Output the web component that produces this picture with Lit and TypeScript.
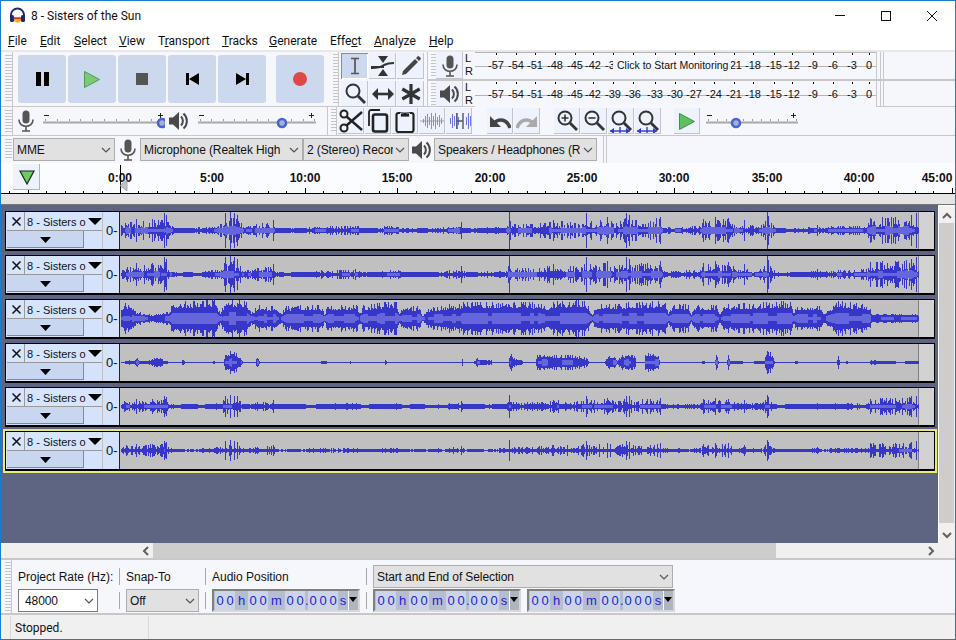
import { LitElement, html, svg, css } from 'lit';
import { customElement } from 'lit/decorators.js';

type Env = [number, number][];

// envelope points are [x, half height], read off the reference at 1.912 x-scale and 3x y-scale
const MAIN: Env = [[0, 14], [10, 32], [25, 18], [40, 26], [60, 32], [75, 28], [82, 40], [90, 24], [100, 7], [115, 5], [170, 10], [190, 18], [198, 36], [215, 38], [225, 28], [235, 9], [260, 18], [290, 24], [295, 5], [330, 6], [380, 11], [450, 14], [460, 6], [490, 4], [500, 11], [530, 13], [540, 4], [600, 7], [650, 18], [660, 6], [735, 9], [742, 30], [750, 18], [800, 20], [830, 28], [870, 22], [890, 34], [900, 26], [930, 36], [945, 22], [965, 36], [975, 30], [1000, 32], [1030, 36], [1035, 9], [1080, 11], [1108, 11], [1114, 30], [1140, 30], [1160, 34], [1180, 15], [1225, 15], [1235, 36], [1245, 16], [1258, 4], [1300, 6], [1330, 11], [1340, 6], [1360, 13], [1400, 13], [1425, 15], [1435, 36], [1480, 38], [1510, 42], [1522, 13], [1526, 2]];
const LOUD: Env = [[0, 30], [10, 42], [25, 20], [55, 10], [70, 12], [90, 16], [98, 44], [180, 48], [190, 12], [198, 52], [240, 46], [248, 14], [262, 36], [285, 30], [295, 38], [305, 10], [315, 32], [380, 36], [388, 14], [395, 34], [450, 36], [456, 12], [462, 34], [525, 46], [532, 14], [540, 30], [570, 32], [576, 8], [590, 30], [650, 40], [656, 44], [800, 42], [808, 32], [832, 46], [888, 48], [900, 10], [908, 36], [1040, 48], [1046, 16], [1055, 38], [1085, 36], [1090, 12], [1098, 36], [1138, 34], [1144, 14], [1150, 36], [1280, 46], [1286, 14], [1292, 34], [1335, 32], [1342, 12], [1368, 46], [1430, 36], [1434, 12], [1520, 12], [1526, 2]];
const VOICE: Env = [[0, 0], [10, 4], [28, 6], [30, 20], [34, 5], [50, 5], [70, 14], [75, 16], [80, 4], [88, 3], [92, 0], [115, 0], [118, 12], [121, 0], [172, 0], [176, 3], [180, 0], [196, 0], [198, 30], [212, 36], [228, 18], [232, 0], [256, 0], [260, 18], [265, 0], [380, 0], [382, 4], [392, 4], [395, 0], [435, 0], [438, 3], [441, 0], [503, 0], [505, 10], [507, 0], [650, 0], [652, 8], [654, 0], [674, 0], [680, 12], [690, 8], [708, 6], [710, 0], [740, 0], [743, 28], [752, 10], [765, 8], [768, 0], [792, 0], [796, 28], [830, 22], [860, 22], [890, 12], [895, 0], [925, 0], [930, 20], [945, 20], [948, 2], [955, 20], [970, 28], [982, 18], [985, 0], [1000, 0], [1002, 28], [1027, 28], [1029, 0], [1110, 0], [1113, 8], [1116, 0], [1134, 0], [1138, 26], [1142, 0], [1158, 0], [1160, 28], [1164, 5], [1188, 3], [1192, 0], [1208, 0], [1212, 5], [1230, 3], [1234, 38], [1246, 24], [1249, 0], [1285, 0], [1290, 4], [1300, 0], [1368, 0], [1370, 22], [1374, 0], [1384, 0], [1386, 8], [1390, 0], [1430, 0], [1432, 5], [1480, 4], [1484, 0], [1498, 0], [1500, 4], [1525, 4], [1526, 0]];

// single-column peaks that stand out of the main mix
const MAIN_SPIKES: Env = [[28, 32], [60, 34], [82, 50], [86, 44], [198, 50], [208, 54], [216, 50], [222, 46], [290, 30], [650, 24], [742, 54], [826, 30], [890, 50], [930, 38], [966, 50], [972, 46], [1030, 40], [1112, 34], [1136, 40], [1160, 36], [1192, 30], [1235, 54], [1238, 42], [1330, 16], [1432, 36], [1455, 40], [1480, 38], [1510, 46], [1520, 50]];

function envAt(env: Env, x: number) {
  for (let i = 1; i < env.length; i++) {
    if (x <= env[i][0]) {
      const [x0, y0] = env[i - 1];
      const [x1, y1] = env[i];
      return y0 + ((y1 - y0) * (x - x0)) / (x1 - x0 || 1);
    }
  }
  return 0;
}

function buildWave(env: Env, spikes: Env, seed: number, scale: number, floor: number, kmin: number, rmsK: number) {
  let s = seed;
  const rand = () => {
    s = (s * 1664525 + 1013904223) % 4294967296;
    return s / 4294967296;
  };
  const cy = 18.5;
  const tall = new Map(spikes.map(([x, h]) => [Math.round(x / 1.912), (h / 3) * scale]));
  let peak = '';
  let rms = '';
  let block = 1;
  let left = 0;
  for (let col = 0; col < 798; col++) {
    if (left-- <= 0) {
      // runs of quieter samples give the band its broken edge
      block = rand() < 0.35 ? 0.4 : 1;
      left = 2 + Math.floor(rand() * 8);
    }
    const zx = col * 1.912;
    const e = (envAt(env, zx) / 3) * scale;
    const r = rand();
    const k = rand() < 0.1 ? 1 : kmin + r * r * (1 - kmin);
    const a = Math.min(18, Math.max(floor * block, e * k, tall.get(col) ?? 0));
    const x = col + 1.5;
    peak += `M${x} ${Math.floor(cy - a)}V${Math.ceil(cy + a)}`;
    const b = Math.min(a, e * rmsK * block);
    if (b >= 1) rms += `M${x} ${Math.floor(cy - b)}V${Math.ceil(cy + b)}`;
  }
  return { peak, rms };
}

const WAVES = [
  buildWave(MAIN, MAIN_SPIKES, 11, 1, 2, 0.25, 0.3),
  buildWave(MAIN, MAIN_SPIKES, 47, 1, 2, 0.25, 0.26),
  buildWave(LOUD, [], 93, 1.12, 2, 0.6, 0.3),
  buildWave(VOICE, [], 5, 1, 0.5, 0.55, 0.3),
  buildWave(MAIN, MAIN_SPIKES, 77, 0.62, 2, 0.2, 0.18),
  buildWave(MAIN, MAIN_SPIKES, 131, 0.55, 1, 0.15, 0.14),
];

const DB = [[21, '-57'], [41, '-54'], [60, '-51'], [80, '-48'], [100, '-45'], [118, '-42'], [138, '-39'], [158, '-36'], [180, '-33'], [200, '-30'], [219, '-27'], [239, '-24'], [259, '-21'], [278, '-18'], [299, '-15'], [317, '-12'], [338, '-9'], [358, '-6'], [377, '-3'], [394, '0']] as [number, string][];

// these sit fully under the "Click to Start Monitoring" label
const HIDDEN = ['-36', '-33', '-30', '-27', '-24'];

const MENUS: [string, string, string, number][] = [
  ['', 'F', 'ile', 32], ['', 'E', 'dit', 34], ['', 'S', 'elect', 45], ['', 'V', 'iew', 39],
  ['T', 'r', 'ansport', 64], ['', 'T', 'racks', 47], ['', 'G', 'enerate', 61], ['Effe', 'c', 't', 44],
  ['', 'A', 'nalyze', 55], ['', 'H', 'elp', 30],
];

const chevron = html`<svg class="chev" width="10" height="6" viewBox="0 0 10 6"><path d="M1 1l4 4 4-4" fill="none" stroke="#555" stroke-width="1.2"/></svg>`;

const micIcon = html`<svg width="18" height="22" viewBox="0 0 18 22"><rect x="5.5" y="0.5" width="7" height="13" rx="3.5" fill="#555"/><path d="M2 9.5c0 9 14 9 14 0" fill="none" stroke="#555" stroke-width="1.6"/><path d="M9 16v5M5 21h8" stroke="#555" stroke-width="1.6"/></svg>`;

const speakerIcon = html`<svg width="20" height="20" viewBox="0 0 20 20"><path d="M0 6.5h4L10 1v18L4 13.5H0z" fill="#4a4a4a"/><path d="M12 5.5c2.5 2.5 2.5 6.5 0 9M14.5 2.5c4.5 4 4.5 11 0 15" fill="none" stroke="#4a4a4a" stroke-width="2"/></svg>`;

const lens = (extra = svg``, stroke = '#333') => html`<svg width="24" height="24" viewBox="0 0 24 24"><circle cx="10" cy="9" r="6.5" fill="none" stroke="${stroke}" stroke-width="2"/><path d="M15 14l7 7" stroke="${stroke}" stroke-width="2.8"/>${extra}</svg>`;

const blueArrows = svg`<path d="M1 22h20" stroke="#2a3ccc" stroke-width="1.4"/><path d="M1 22l4-3v6zM21 22l-4-3v6z" fill="#2a3ccc"/><path d="M11 18v7" stroke="#2a3ccc" stroke-width="1.4"/>`;

const bars = (heights: number[], color: string) => svg`${heights.map((h, i) => svg`<path d="M${3.5 + i * 2} ${12 - h}V${12 + h}" stroke="${color}" stroke-width="1"/>`)}`;

const TOOLS = [
  html`<svg width="20" height="20" viewBox="0 0 20 20"><path d="M6 2.500h8M6 17.500h8M10 2.500v15" stroke="#555" stroke-width="1.700" fill="none"/></svg>`,
  html`<svg width="24" height="22" viewBox="0 0 24 22"><path d="M7 1h10l-5 7zM7 21h10l-5-7z" fill="#333"/><path d="M1 13c7 0 9-1 12-3 3-1.500 6-2 10-2" stroke="#333" stroke-width="2" fill="none"/><path d="M1 11v3M1 12h12" stroke="#333" stroke-width="2"/></svg>`,
  html`<svg width="22" height="22" viewBox="0 0 22 22"><path d="M3 16L15 4l3 3L6 19l-4 1z" fill="#444"/><path d="M16 3l1.500-1.500a1.200 1.200 0 0 1 1.700 0l1.300 1.300a1.200 1.200 0 0 1 0 1.700L19 6z" fill="#444"/></svg>`,
  lens(),
  html`<svg width="22" height="14" viewBox="0 0 22 14"><path d="M0 7l6-6v12zM22 7l-6-6v12z" fill="#333"/><path d="M5 7h12" stroke="#333" stroke-width="2.600"/></svg>`,
  html`<svg width="22" height="22" viewBox="0 0 22 22"><path d="M11 1v20M2.300 6l17.400 10M2.300 16L19.700 6" stroke="#333" stroke-width="3.200"/></svg>`,
];

const EDIT1 = [
  html`<svg width="24" height="24" viewBox="0 0 24 24"><circle cx="5" cy="5" r="3.500" fill="none" stroke="#222" stroke-width="2"/><circle cx="5" cy="19" r="3.500" fill="none" stroke="#222" stroke-width="2"/><path d="M7.500 7.500L23 21M7.500 16.500L23 3" stroke="#222" stroke-width="2.400"/></svg>`,
  html`<svg width="24" height="24" viewBox="0 0 24 24"><path d="M14 1H5a2 2 0 0 0-2 2v14" fill="none" stroke="#222" stroke-width="1.800"/><rect x="7" y="5.500" width="14" height="17" rx="2" fill="none" stroke="#222" stroke-width="2.600"/></svg>`,
  html`<svg width="22" height="24" viewBox="0 0 22 24"><rect x="2.500" y="4" width="17" height="19" rx="2" fill="none" stroke="#222" stroke-width="2.200"/><path d="M6.500 8V4h3a1.600 1.600 0 0 1 3 0h3v4z" fill="#222" stroke="#eef2fc" stroke-width="0.800"/></svg>`,
  html`<svg width="24" height="24" viewBox="0 0 24 24"><path d="M0 12h24" stroke="#a0a0a8"/>${bars([2, 5, 7, 4, 8, 5, 8, 4, 6, 3], '#8c90c0')}</svg>`,
  html`<svg width="24" height="24" viewBox="0 0 24 24">${bars([3, 7, 5, 8, 4], '#6a74d8')}<path d="M10 4v16M16 4v16M10 12h6" stroke="#555" stroke-width="1.400"/>${bars([0, 0, 0, 0, 0, 0, 0, 0, 4, 8, 5, 7], '#6a74d8')}</svg>`,
];

const undoShape = (c: string) => svg`<path d="M1 3v11h11z" fill="${c}"/><path d="M5 10c5-5 13-4 16 5" fill="none" stroke="${c}" stroke-width="3.600"/>`;

const EDIT2 = [
  html`<svg width="22" height="16" viewBox="0 0 22 16">${undoShape('#444')}</svg>`,
  html`<svg class="mirror" width="22" height="16" viewBox="0 0 22 16">${undoShape('#aaa')}</svg>`,
];

const ZOOMS = [
  lens(svg`<path d="M6.500 9h7M10 5.500v7" stroke="#333" stroke-width="1.600"/>`),
  lens(svg`<path d="M6.500 9h7" stroke="#333" stroke-width="1.600"/>`),
  lens(blueArrows),
  lens(blueArrows),
];

const TIME_CELLS: [string, boolean, number][] = [
  ['0', true, 10], ['0', true, 10], ['h', false, 13], ['0', true, 10], ['0', true, 10], ['m', false, 17],
  ['0', true, 10], ['0', true, 10], ['.', false, 3], ['0', true, 10], ['0', true, 10], ['0', true, 10], ['s', false, 10],
];

const timeField = html`<div class="time">
  ${TIME_CELLS.map(([ch, lit, w]) => html`<span class="cell ${lit ? 'lit' : ''}" style="width:${w}px">${ch}</span>`)}
  <span class="time-arrow"></span>
</div>`;

const ruler = () => {
  const ticks = [];
  for (let m = -6; m <= 46; m++) {
    const x = Math.round(120 + m * 18.48) + 0.5;
    if (x < 1) continue;
    ticks.push(svg`<path d="M${x} ${m % 5 === 0 ? 25 : 28}V30" stroke="#000"/>`);
  }
  const labels: [number, string][] = [[120, '0:00'], [212, '5:00'], [305, '10:00'], [397, '15:00'], [490, '20:00'], [582, '25:00'], [674, '30:00'], [767, '35:00'], [859, '40:00'], [937, '45:00']];
  return html`<svg class="ruler" width="954" height="31" viewBox="1 0 954 31">
    <path d="M1 30.500H955" stroke="#000"/>
    ${ticks}
    ${labels.map(([x, t]) => svg`<text class="rt" x="${x}" y="19" text-anchor="middle">${t}</text>`)}
    <path d="M120.500 2V30" stroke="#000"/>
    <path d="M127 17v11l-7-5.500z" fill="#c4c4c4" stroke="#909090" stroke-width="0.700"/>
  </svg>`;
};

const meter = (label: boolean) => {
  const scale = label ? DB.filter(([, t]) => !HIDDEN.includes(t)) : DB;
  return html`<div class="meter">
    <svg width="401" height="27" viewBox="0 0 401 27">
      <path d="M0 14.500H401" stroke="#b4b4b4"/>
      ${DB.map(([x]) => svg`<path d="M${x + 0.5} 1V3" stroke="#000"/>`)}
      ${scale.map(([x, t]) => svg`<text class="db" x="${x}" y="17" text-anchor="middle">${t}</text>`)}
    </svg>
    ${label ? html`<span class="monitor">Click to Start Monitoring</span>` : ''}
  </div>`;
};

const slider = (w: number, pos: number) => html`<svg class="slider" width="${w}" height="22" viewBox="0 0 ${w} 22">
  <path d="M1 6.500h5M${w - 7} 6.500h5M${w - 4.500} 4v5" stroke="#222"/>
  <path d="M0 13.500H${w}" stroke="#a8a8a8" stroke-width="2"/>
  ${Array.from({ length: 11 }, (_, i) => svg`<path d="M${Math.round(((w - 4) * i) / 10) + 2.500} 10v2" stroke="#999"/>`)}
  <circle cx="${pos}" cy="14" r="4" fill="#a8b0d0" stroke="#4a64d8" stroke-width="2.600"/>
</svg>`;

@customElement('app-root')
export class AppRoot extends LitElement {
  static styles = css`
    :host {
      display: block;
      width: 956px;
      height: 640px;
      box-sizing: border-box;
      border: 1px solid #1a7dcc;
      background: #f6f7fd;
      overflow: hidden;
      font-family: 'Liberation Sans', Arial, sans-serif;
      font-size: 12px;
      color: #111;
    }
    svg { display: block; flex: none; }
    .mirror { transform: scaleX(-1); }

    .title {
      height: 29px;
      display: flex;
      align-items: center;
      background: #fff;
      padding-left: 8px;
      font-family: Roboto, sans-serif;
      font-size: 12px;
    }
    .title .name { margin-left: 5px; flex: 1; }
    .winbtn { width: 46px; height: 29px; display: flex; align-items: center; justify-content: center; }
    .menu {
      height: 20px;
      box-sizing: border-box;
      padding: 2px 0 0 7px;
      display: flex;
      align-items: center;
      background: #fff;
      font-family: Roboto, sans-serif;
      font-size: 12px;
    }
    .menu span { display: block; white-space: nowrap; }

    .docks { height: 113px; border-top: 2px solid #e8e8e8; box-sizing: border-box; }
    .row { display: flex; border-bottom: 1px solid #c8c8c8; box-sizing: border-box; }
    .row-a { height: 55px; }
    .row-b { height: 29px; }
    .row-c { height: 27px; border-bottom: 0; align-items: center; }
    .grip {
      flex: none;
      width: 7px;
      margin: 3px 0 3px 4px;
      background: repeating-linear-gradient(#c4c4c4 0 1px, transparent 1px 3px);
    }
    .vline { flex: none; width: 1px; align-self: stretch; background: #c8c8c8; }

    .transport { display: flex; gap: 2px; align-items: center; padding: 0 6px 0 5px; }
    .tp {
      width: 48px;
      height: 48px;
      border-radius: 3px;
      background: #ccd8ee;
      display: flex;
      align-items: center;
      justify-content: center;
    }
    .tp.rec { margin-left: 8px; }

    .tools {
      display: grid;
      grid-template-columns: repeat(3, 27px);
      grid-template-rows: 26px 26px;
      column-gap: 1px;
      row-gap: 2px;
      padding: 0 3px 0 2px;
      align-content: start;
      margin-top: 1px;
    }
    .tb {
      background: #eef2fc;
      box-shadow: inset -1px -1px #c4c4c8;
      display: flex;
      align-items: center;
      justify-content: center;
    }
    .tb.on { background: #ccd8ee; box-shadow: inset 1px 1px #8c8c8c, inset -1px -1px #fff; }

    .meters { flex: 1; display: flex; flex-direction: column; min-width: 0; }
    .meter-row { display: flex; height: 27px; box-sizing: border-box; }
    .meter-row + .meter-row { border-top: 2px solid #c8c8c8; height: 28px; }
    .grip.thin { width: 5px; margin: 2px 0 2px 3px; }
    .mic-btn { width: 27px; flex: none; }
    .lr { flex: none; width: 10px; margin-left: 2px; font-size: 11px; line-height: 13px; }
    .meter { position: relative; flex: none; width: 401px; background: #f6f7fd; }
    .meter-row:first-child .meter { box-shadow: inset 0 1px #b4b4b4; }
    .db { font: 11px 'Liberation Sans', Arial, sans-serif; fill: #111; }
    .monitor {
      position: absolute;
      left: 138px;
      top: 6px;
      height: 15px;
      padding: 0 3px 0 4px;
      line-height: 15px;
      background: #f6f7fd;
      font-size: 10.500px;
      white-space: nowrap;
      color: #111;
    }
    .meter-end {
      flex: none;
      width: 6px;
      border-left: 1px solid #c8c8c8;
      border-right: 1px solid #c8c8c8;
      background: linear-gradient(90deg, transparent 3px, #c8c8c8 3px 4px, transparent 4px);
    }

    .iconbox { flex: none; display: flex; align-items: center; justify-content: center; }
    .slider { margin-top: 2px; }
    .cluster { display: flex; gap: 1px; align-items: center; }
    .cluster .tb { width: 26px; height: 26px; }

    .select {
      flex: none;
      height: 23px;
      box-sizing: border-box;
      display: flex;
      align-items: center;
      justify-content: space-between;
      padding: 0 3px 0 3px;
      background: #e1e1e1;
      border: 1px solid #adadad;
      white-space: nowrap;
      overflow: hidden;
      font-size: 12px;
    }
    .select .txt { overflow: hidden; flex: 1; letter-spacing: -0.1px; }
    .chev { flex: none; margin-left: 2px; }

    .ruler-wrap { height: 42px; position: relative; background: #fbfcff; }
    .ruler { background: #fbfcff; }
    .rt { font: bold 12px 'Liberation Sans', Arial, sans-serif; fill: #111; }
    .band { height: 11px; background: #e4e4e4; border-bottom: 1px solid #777; box-sizing: border-box; }
    .pin {
      position: absolute;
      left: 12px;
      top: 1px;
      width: 27px;
      height: 26px;
      background: #eef2fc;
      box-shadow: inset -1px -1px #b4b4b8;
      display: flex;
      align-items: center;
      justify-content: center;
    }

    .main { display: flex; height: 338px; }
    .tracks {
      width: 937px;
      flex: none;
      box-sizing: border-box;
      background: #5e6583;
      padding: 6px 0 0 4px;
      display: flex;
      flex-direction: column;
      gap: 4px;
    }
    .track {
      width: 930px;
      height: 40px;
      box-sizing: border-box;
      display: flex;
      border: 1px solid #000;
      border-width: 1px 2px 2px 1px;
      background: #c0c0c0;
    }
    .track.sel { box-shadow: 0 0 0 2px #e9e97c; }
    .panel {
      flex: none;
      width: 96px;
      background: #d4e2fb;
      display: flex;
      flex-direction: column;
    }
    .panel-top { display: flex; height: 19px; }
    .close {
      width: 18px;
      margin-left: 1px;
      display: flex;
      align-items: center;
      justify-content: center;
      background: #d6e4fc;
      box-shadow: inset -1px -1px #999;
    }
    .tname {
      flex: 1;
      display: flex;
      align-items: center;
      padding-left: 2px;
      background: #d6e4fc;
      box-shadow: inset 0 -1px #999;
      white-space: nowrap;
      overflow: hidden;
      font-size: 11px;
      color: #111;
    }
    .tname .t { flex: 1; }
    .collapse {
      width: 77px;
      height: 17px;
      margin-left: 1px;
      background: #c9d6ef;
      box-shadow: inset -1px -1px #888;
      display: flex;
      align-items: center;
      justify-content: center;
    }
    .vruler {
      flex: none;
      width: 17px;
      box-sizing: border-box;
      margin-left: 1px;
      background: #d4e2fb;
      font-size: 13px;
      line-height: 38px;
      padding-left: 3px;
      border-right: 1px solid #222;
    }
    .wave { flex: none; shape-rendering: crispEdges; }

    .vscroll {
      flex: 1;
      display: flex;
      flex-direction: column;
      align-items: stretch;
      background: #f0f0f0;
      margin-top: 2px;
      border-left: 1px solid #fff;
    }
    .arrow { flex: none; height: 16px; display: flex; align-items: center; justify-content: center; }
    .vthumb { margin: 0 1px 0 0; background: #cdcdcd; height: 300px; }
    .vgap { flex: 1; }

    .hscroll { height: 15px; display: flex; background: #f0f0f0; align-items: stretch; }
    .hthumb { width: 623px; background: #cdcdcd; margin-left: 0; }
    .harrow { width: 16px; display: flex; align-items: center; justify-content: center; flex: none; }

    .selbar {
      height: 57px;
      box-sizing: border-box;
      border-top: 2px solid #c8c8c8;
      border-bottom: 2px solid #c8c8c8;
      display: flex;
      background: #f6f7fd;
    }
    .selbar .grip { margin: 2px 0 2px 4px; width: 6px; }
    .selgrid {
      margin-left: 6px;
      display: grid;
      grid-template-columns: 101px 7px 79px 7px 154px 7px 300px;
      grid-template-rows: 25px 23px;
      margin-top: 4px;
      align-items: center;
    }
    .sep { width: 1px; height: 17px; background: #a8a8a8; }
    .time {
      width: 148px;
      height: 23px;
      box-sizing: border-box;
      border: 2px solid #808080;
      border-right-color: #d8d8d8;
      border-bottom-color: #d8d8d8;
      background: #b6bdd0;
      display: flex;
      align-items: stretch;
      padding-left: 1px;
    }
    .cell {
      display: block;
      font-size: 13px;
      line-height: 19px;
      text-align: center;
      color: #2222cc;
    }
    .cell.lit { background: #ccd4e8; }
    .time-arrow {
      flex: none;
      width: 10px;
      box-sizing: border-box;
      border-left: 1px solid #fff;
      position: relative;
      background: #b0b4bc;
    }
    .time-arrow::after {
      content: '';
      position: absolute;
      left: 0;
      top: 6px;
      border: 4px solid transparent;
      border-top: 5px solid #000;
      border-bottom: 0;
    }
    .times { display: flex; gap: 6px; }
    .rate { background: #fff; border: 1px solid #7a7a7a; height: 23px; width: 80px; padding-left: 6px; }
    .snap { width: 73px; }

    .status {
      height: 24px;
      display: flex;
      align-items: center;
      background: #f0f0f0;
      font-family: Roboto, sans-serif;
      font-size: 12px;
    }
    .status .first {
      margin-left: 9px;
      width: 133px;
      padding: 1px 0 0 4px;
      box-sizing: content-box;
      height: 22px;
      display: flex;
      align-items: center;
      border-left: 1px solid #d8d8d8;
      border-right: 1px solid #d8d8d8;
    }
    .mr5 { margin-right: 5px; }
    .ml11 { margin-left: 11px; }
    .ml1 { margin-left: 1px; }
    .ml13 { margin-left: 13px; }
    .ml14 { margin-left: 14px; }
    .ml15 { margin-left: 15px; }
    .ml6 { margin-left: 6px; }
    .ml2 { margin-left: 2px; }
    .w25 { width: 25px; }
    .w26 { width: 26px; margin-right: 4px; }
    .w28 { width: 28px; }
    .s102 { width: 102px; }
    .s163 { width: 163px; }
    .s106 { width: 106px; }
    .s300 { width: 300px; }
    .fill { flex: 1; }
    .hpad { width: 136px; flex: none; }
    .mr16 { margin-right: 16px; }
    .stretch { align-self: stretch; }
  `;

  private renderTrack(i: number) {
    const w = WAVES[i];
    return html`<div class="track ${i === 5 ? 'sel' : ''}">
      <div class="panel">
        <div class="panel-top">
          <div class="close"><svg width="9" height="9" viewBox="0 0 9 9"><path d="M.5.5l8 8M8.500.5l-8 8" stroke="#111" stroke-width="1.500"/></svg></div>
          <div class="tname"><span class="t">8 - Sisters o</span>
            <svg width="14" height="7" viewBox="0 0 14 7"><path d="M0 0h14L7 7z" fill="#000"/></svg></div>
        </div>
        <div class="collapse"><svg width="11" height="6" viewBox="0 0 11 6"><path d="M0 0h11L5.500 6z" fill="#000"/></svg></div>
      </div>
      <div class="vruler">0-</div>
      <svg class="wave" width="814" height="37" viewBox="0 0 814 37">
        <rect width="814" height="37" fill="#c0c0c0"/>
        <rect x="798" width="16" height="37" fill="#d2d2d2"/>
        <path d="M798.500 0V37" stroke="#808080"/>
        <path d="M1 18.500H798" stroke="#3636c8"/>
        <path d="${w.peak}" stroke="#3636c8" stroke-width="1"/>
        <path d="${w.rms}" stroke="#6666dc" stroke-width="1"/>
      </svg>
    </div>`;
  }

  render() {
    return html`
      <div class="title">
        <svg width="17" height="17" viewBox="0 0 17 17">
          <path d="M2 11V8a6.500 6.500 0 0 1 13 0v3" fill="none" stroke="#1c2a70" stroke-width="2"/>
          <rect x="1" y="8" width="4" height="7" rx="1.500" fill="#1c2a70"/>
          <rect x="12" y="8" width="4" height="7" rx="1.500" fill="#1c2a70"/>
          <path d="M5 10h7v4l-3.500 2L5 14z" fill="#f6a820"/>
          <path d="M5 10.500h7v1.500H5z" fill="#d8361c"/>
        </svg>
        <span class="name">8 - Sisters of the Sun</span>
        <div class="winbtn"><svg width="10" height="1"><rect width="10" height="1" fill="#111"/></svg></div>
        <div class="winbtn"><svg width="10" height="10"><rect x=".5" y=".5" width="9" height="9" fill="none" stroke="#111"/></svg></div>
        <div class="winbtn"><svg width="10" height="10"><path d="M0 0l10 10M10 0L0 10" stroke="#111"/></svg></div>
      </div>
      <div class="menu">
        ${MENUS.map(([a, u, b, w]) => html`<span style="width:${w}px">${a}<u>${u}</u>${b}</span>`)}
      </div>

      <div class="docks">
        <div class="row row-a">
          <div class="grip"></div>
          <div class="vline"></div>
          <div class="transport">
            <div class="tp"><svg width="13" height="14"><path d="M0 0h5v14H0zM8 0h5v14H8z" fill="#000"/></svg></div>
            <div class="tp"><svg width="16" height="17"><path d="M.5.500l15 8-15 8z" fill="#7ec87a" stroke="#4f9a50"/></svg></div>
            <div class="tp"><svg width="12" height="12"><rect width="12" height="12" fill="#555"/></svg></div>
            <div class="tp"><svg width="13" height="12"><path d="M0 0h3v12H0zM13 0v12L3 6z" fill="#000"/></svg></div>
            <div class="tp"><svg width="13" height="12"><path d="M10 0h3v12h-3zM0 0v12l10-6z" fill="#000"/></svg></div>
            <div class="tp rec"><svg width="14" height="14"><circle cx="7" cy="7" r="7" fill="#e04848"/></svg></div>
          </div>
          <div class="grip thin"></div>
          <div class="vline"></div>
          <div class="tools">
            ${TOOLS.map((t, i) => html`<div class="tb ${i === 0 ? 'on' : ''}">${t}</div>`)}
          </div>
          <div class="vline"></div>
          <div class="meters">
            <div class="meter-row">
              <div class="grip thin"></div>
              <div class="tb mic-btn">${micIcon}</div>
              <div class="lr">L<br />R</div>
              ${meter(true)}
              <div class="meter-end"></div>
            </div>
            <div class="meter-row">
              <div class="grip thin"></div>
              <div class="tb mic-btn">${speakerIcon}</div>
              <div class="lr">L<br />R</div>
              ${meter(false)}
              <div class="meter-end"></div>
            </div>
          </div>
        </div>

        <div class="row row-b">
          <div class="grip"></div>
          <div class="vline"></div>
          <div class="iconbox w26">${micIcon}</div>
          ${slider(122, 119)}
          <div class="iconbox w28 mr5">${speakerIcon}</div>
          ${slider(118, 84)}
          <div class="vline ml11"></div>
          <div class="grip thin"></div>
          <div class="vline"></div>
          <div class="cluster ml1">${EDIT1.map((c) => html`<div class="tb">${c}</div>`)}</div>
          <div class="cluster ml15">${EDIT2.map((c) => html`<div class="tb">${c}</div>`)}</div>
          <div class="cluster ml14">${ZOOMS.map((c) => html`<div class="tb">${c}</div>`)}</div>
          <div class="cluster ml13"><div class="tb"><svg width="16" height="17"><path d="M.5.500l15 8-15 8z" fill="#5fc060" stroke="#3f9048"/></svg></div></div>
          <div class="ml6">${slider(92, 30)}</div>
        </div>

        <div class="row row-c">
          <div class="grip stretch"></div>
          <div class="select s102 ml1"><span class="txt">MME</span>${chevron}</div>
          <div class="iconbox w25">${micIcon}</div>
          <div class="select s163"><span class="txt">Microphone (Realtek High</span>${chevron}</div>
          <div class="select s106"><span class="txt">2 (Stereo) Recor</span>${chevron}</div>
          <div class="iconbox w25">${speakerIcon}</div>
          <div class="select s163"><span class="txt">Speakers / Headphones (R</span>${chevron}</div>
          <div class="vline ml6"></div>
          <div class="vline ml2"></div>
        </div>
      </div>

      <div class="ruler-wrap">
        ${ruler()}
        <div class="band"></div>
        <div class="pin"><svg width="16" height="15"><path d="M1 1h14L8 14z" fill="#6ccc60" stroke="#222" stroke-width="1.200"/></svg></div>
      </div>

      <div class="main">
        <div class="tracks">${[0, 1, 2, 3, 4, 5].map((i) => this.renderTrack(i))}</div>
        <div class="vscroll">
          <div class="arrow"><svg width="10" height="7"><path d="M1 6l4-4 4 4" fill="none" stroke="#606060" stroke-width="2"/></svg></div>
          <div class="vthumb"></div>
          <div class="vgap"></div>
          <div class="arrow"><svg width="10" height="7"><path d="M1 1l4 4 4-4" fill="none" stroke="#606060" stroke-width="2"/></svg></div>
        </div>
      </div>

      <div class="hscroll">
        <div class="hpad"></div>
        <div class="harrow"><svg width="7" height="10"><path d="M6 1L2 5l4 4" fill="none" stroke="#606060" stroke-width="2"/></svg></div>
        <div class="hthumb"></div>
        <div class="fill"></div>
        <div class="harrow mr16"><svg width="7" height="10"><path d="M1 1l4 4-4 4" fill="none" stroke="#606060" stroke-width="2"/></svg></div>
      </div>

      <div class="selbar">
        <div class="grip"></div>
        <div class="vline"></div>
        <div class="selgrid">
          <span>Project Rate (Hz):</span><div class="sep"></div>
          <span>Snap-To</span><div class="sep"></div>
          <span>Audio Position</span><div class="sep"></div>
          <div class="select s300"><span class="txt">Start and End of Selection</span>${chevron}</div>

          <div class="select rate"><span class="txt">48000</span>${chevron}</div><div class="sep"></div>
          <div class="select snap"><span class="txt">Off</span>${chevron}</div><div class="sep"></div>
          ${timeField}<div class="sep"></div>
          <div class="times">${timeField}${timeField}</div>
        </div>
      </div>

      <div class="status"><div class="first">Stopped.</div></div>
    `;
  }
}
